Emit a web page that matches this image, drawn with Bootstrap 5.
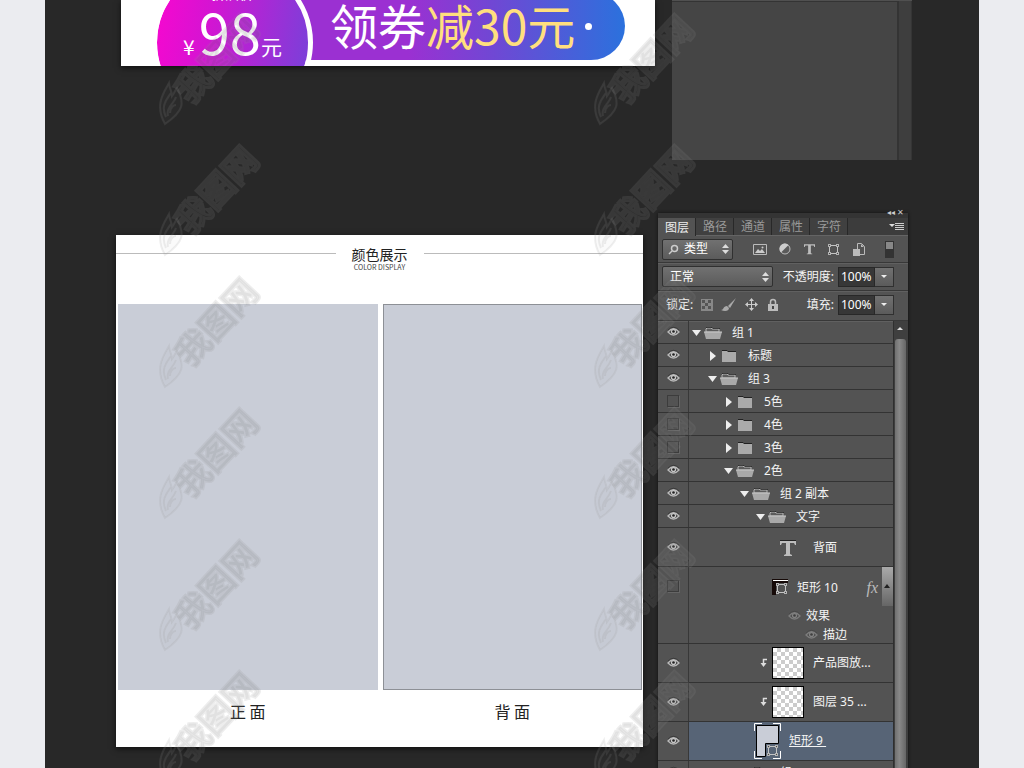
<!DOCTYPE html>
<html lang="zh-CN">
<head>
<meta charset="utf-8">
<meta name="viewport" content="width=device-width, initial-scale=1">
<title>颜色展示</title>
<link href="https://cdn.jsdelivr.net/npm/bootstrap@5.3.0/dist/css/bootstrap.min.css" rel="stylesheet">
<style>
body{background:#ebecf0;font-family:"Noto Sans","Noto Sans CJK SC",sans-serif;font-size:12px;line-height:16px}
.stage{margin:0 45px;height:100vh;background:#282828}
.top-row{padding:0 67px 0 76px;gap:17px;margin-bottom:53px}
.bottom-row{padding:0 71px;gap:15px}
.art{background:#fff;box-shadow:0 2px 6px rgba(0,0,0,.6)}
.cjk{font-family:"Noto Sans CJK SC",sans-serif}
/* coupon banner */
.banner{height:66px;min-width:0}
.pill{margin:-8px 30px 0 110px;height:68px;border-radius:0 34px 34px 0;background:linear-gradient(90deg,#9b30d2 45%,#6f48d4 67%,#2b71dd);color:#fff;font-size:48px;line-height:64px;padding-left:99px;white-space:nowrap}
.pill span{margin-top:-5px}
.pill em{font-style:normal;color:#ffdf7e}
.pill .dot{width:7px;height:7px;background:#fff;margin:0 0 0 10px}
.coin{left:31px;top:-38px;width:161px;height:161px;border:5px solid #fff;background:linear-gradient(100deg,#fa06cf,#d414d2 35%,#7a40d9 95%);background-clip:padding-box;color:#fff}
.coin-note{font-size:14px;line-height:16px;margin-top:18px}
.coin-price{font-size:56px;line-height:60px}
.coin-price small{font-size:21px}
.side-top{width:240px;height:160px;background:#454545;border-top:1px solid #505050;box-shadow:inset 0 1px #343434}
.side-top i{width:15px;background:#3e3e3e;border-left:2px solid #343434;border-right:1px solid #353535}
/* colour board */
.board{margin-top:22px;height:512px;color:#222;min-width:0}
.board-head{height:69px;padding-top:18px}
.board-head hr{margin:0;opacity:1;border-color:#bbb}
.board-head h1{font-size:14px;line-height:18px;margin:-8px 16px 0;font-weight:400}
.board-head p{font-size:7px;line-height:8px;margin:0;color:#444}
.panes{gap:5px;padding:0 1px 0 2px}
.swatch{height:386px;background:#c9cdd7}
.swatch.edged{border:1px solid #8d9096}
.panes figcaption{font-size:16px;line-height:20px;margin-top:11px;text-align:center}
/* layers panel */
.panel{width:250px;background:#535353;color:#f4f4f4;box-shadow:0 0 3px #111}
.grip{height:5px;background:#343434;position:relative}
.grip span{position:absolute;right:4px;top:-6px;font-size:8px;line-height:10px;color:#ccc}
.tabs{background:#3c3c3c;border-bottom:1px solid #646464;height:18px}
.tabs button{border:0;border-right:1px solid #282828;background:#404040;color:#999;padding:0 7px;width:38px;line-height:17px;white-space:nowrap;height:17px}
.tabs button.active{background:#535353;color:#eee;height:18px}
.tool{height:28px;padding:0 14px 0 4px;border-bottom:1px solid #383838;box-shadow:0 1px #606060}
.tool:nth-of-type(3){height:27px}
.tool.locks{height:30px;padding-bottom:2px}
.tool svg,.tree svg{display:block;flex:none}
.tool select{appearance:none;height:21px;border:1px solid #303030;border-radius:2px;color:#fff;padding:0 0 0 7px;line-height:18px;background:url("data:image/svg+xml,%3Csvg xmlns='http://www.w3.org/2000/svg' width='7' height='10'%3E%3Cpath fill='%23ddd' d='M0 4L3.5 0 7 4zM0 6h7L3.5 10z'/%3E%3C/svg%3E") right 3px center no-repeat,linear-gradient(#717171,#5b5b5b)}
.tool .kind{width:71px;padding-left:21px}
.tool .blend{width:111px}
.search{left:6px;top:5px;pointer-events:none}
.pct{width:37px;height:20px;background:#373737;border:1px solid #282828;color:#fff;padding:0 0 0 2px;font-size:12px}
.drop{width:19px;height:20px;background:linear-gradient(#717171,#5b5b5b);border:1px solid #303030;border-left:0;padding:0 6px}
.tree{margin:0;padding:0;list-style:none;min-width:0}
.tree>li{display:flex;height:23px;border-bottom:1px solid #333}
.tree>li.tall{height:39px}
.tree>li.fxrow{height:77px}
.vis{width:31px;border-right:1px solid #383838;padding:5px 0 0 9px;flex:none}
.tall .vis,.fxrow .vis{padding-top:13px}
.vis input,.eye{appearance:none;display:block;margin:0;width:12px;height:12px;border:1px solid #3c3c3c;box-shadow:1px 1px #656565}
.vis input:checked,.eye{border:0;box-shadow:none;width:13px;background:url("data:image/svg+xml,%3Csvg xmlns='http://www.w3.org/2000/svg' width='13' height='12'%3E%3Cpath d='M1 6Q6.500-.5 12 6 6.500 12 1 6z' fill='%23454545' stroke='%23b9b9b9' stroke-width='1.300'/%3E%3Ccircle cx='6.500' cy='5.500' r='2.600' fill='%23c8c8c8'/%3E%3Ccircle cx='6.500' cy='5.500' r='1.300' fill='%23222'/%3E%3Cpath d='M1 4Q6.500-1.500 12 4' fill='none' stroke='%23333' stroke-width='.8'/%3E%3C/svg%3E") no-repeat}
.eye{opacity:.4;margin-right:5px}
.item{display:flex;align-items:center;flex:1;min-width:0;white-space:nowrap;padding:2px 0 0 3px}
.item .arrow{margin-right:2px}
.item .folder{margin-right:10px}
.lv1{padding-left:19px}.lv2{padding-left:35px}.lv3{padding-left:51px}.lv4{padding-left:67px}
.lt{padding-left:90px}.lr{padding-left:83px}.lc{padding:0 0 0 71px}.ls{padding:0 0 0 65px}
.thumb{width:32px;height:32px;border:1px solid #000;background:repeating-conic-gradient(#ccc 0 25%,#fff 0 50%) 0 0/8px 8px;margin-right:9px}
.picked .item{background:#576476}
.fx-mark{font-size:16px;color:#bbb;font-family:"Liberation Serif",serif}
.sub-fx{height:19px;display:flex;align-items:center;padding-left:99px}
.sub-fx.inner{padding-left:116px}
.fx-btn{width:11px;height:39px;border:0;padding:0;background:linear-gradient(#aaa,#666)}
.bar{width:15px;background:#3f3f3f;border-left:1px solid #2f2f2f;padding:6px 2px 0 1px;flex:none}
.bar svg{display:block}
.bar i{display:block;background:linear-gradient(90deg,#707070,#888 40%,#666);border-radius:3px 3px 0 0;margin-top:8px;height:500px}
.stamp{left:0;top:0;width:100%;height:100%;pointer-events:none;z-index:9}
</style>
</head>
<body class="position-relative overflow-hidden">
<svg class="d-none" aria-hidden="true">
<symbol id="open" viewBox="0 0 18 12"><path d="M2 5V2l1-1h4l1 1h7v3z" fill="#5c5c5c" stroke="#b5b5b5"/><path d="M0 5h18l-2 7H2z" fill="#a9a9a9"/><path d="M0 5h18" stroke="#c9c9c9"/><path d="M2 .5h6l1 1h7" fill="none" stroke="#222" stroke-width=".7"/></symbol>
<symbol id="shut" viewBox="0 0 18 12"><path d="M2 1h5l1 1h8v10H2z" fill="#aaa"/><path d="M2 .5h5l1 1h8" fill="none" stroke="#222"/></symbol>
<symbol id="down" viewBox="0 0 10 12"><path d="M0 3h9L4.500 9z" fill="#eee"/></symbol>
<symbol id="right" viewBox="0 0 10 12"><path d="M2 1l6 5-6 5z" fill="#eee"/></symbol>
<symbol id="frame" viewBox="0 0 13 13"><path d="M3 2.500h7M3 10.500h7M2.500 3v7M10.500 3v7" stroke="#c4c4c4" fill="none"/><path d="M1 1h3v3H1zM9 1h3v3H9zM1 9h3v3H1zM9 9h3v3H9z" fill="#b4b4b4"/><path d="M2 2h1v1H2zM10 2h1v1h-1zM2 10h1v1H2zM10 10h1v1h-1z" fill="#444"/></symbol>
<symbol id="clip" viewBox="0 0 8 10"><path d="M7 1.500H3.500V6" fill="none" stroke="#ddd" stroke-width="1.500"/><path d="M.5 5h6l-3 4z" fill="#ddd"/></symbol>
<symbol id="tee" viewBox="0 0 16 16"><path d="M0 1h16v4h-1l-1-2h-4v11l2 1v1H4v-1l2-1V3H2L1 5H0z" fill="#bdbdbd"/></symbol>
<symbol id="tri" viewBox="0 0 6 4"><path d="M0 0h6L3 3z" fill="#eee"/></symbol>
</svg>
<main class="stage overflow-hidden">
  <div class="top-row d-flex align-items-start">
    <section class="art banner cjk flex-grow-1 position-relative overflow-hidden" aria-label="领券">
      <div class="pill d-flex align-items-center"><span>领券<em>减30元</em></span><span class="dot rounded-circle"></span></div>
      <div class="coin rounded-circle position-absolute text-center text-nowrap"><div class="coin-note">折后价</div><div class="coin-price"><small class="me-1">¥</small>98<small>元</small></div></div>
    </section>
    <aside class="side-top d-flex justify-content-end flex-shrink-0"><i></i></aside>
  </div>
  <div class="bottom-row d-flex align-items-start">
    <section class="art board cjk flex-grow-1">
      <header class="board-head d-flex align-items-start"><hr class="flex-fill"><div class="text-center"><h1>颜色展示</h1><p>COLOR DISPLAY</p></div><hr class="flex-fill"></header>
      <div class="panes d-flex">
        <figure class="flex-fill m-0"><div class="swatch"></div><figcaption>正 面</figcaption></figure>
        <figure class="flex-fill m-0"><div class="swatch edged"></div><figcaption>背 面</figcaption></figure>
      </div>
    </section>
    <aside class="panel flex-shrink-0">
      <div class="grip"><span>◂◂ ✕</span></div>
      <div class="tabs d-flex">
        <button class="active">图层</button><button>路径</button><button>通道</button><button>属性</button><button>字符</button>
        <svg class="ms-auto me-1 mt-1" width="15" height="10"><path d="M0 2h6L3 5z" fill="#ddd"/><path d="M6 1.500h9M6 3.500h9M6 5.500h9M6 7.500h9" stroke="#ccc"/></svg>
      </div>
      <div class="tool d-flex align-items-center">
        <div class="position-relative"><select class="kind" aria-label="类型"><option>类型</option></select><svg class="search position-absolute" width="11" height="11"><circle cx="6.500" cy="4.500" r="3" fill="none" stroke="#ccc" stroke-width="1.500"/><path d="M4 7L1 10" stroke="#ccc" stroke-width="1.500"/></svg></div>
        <div class="d-flex flex-fill justify-content-between align-items-center ps-3 ms-1">
          <svg width="14" height="13"><path d="M.5 1.500h13v10H.5z" fill="#555" stroke="#bbb"/><path d="M2 10l3-4 2 2 2-2 3 4z" fill="#ccc"/><circle cx="9.500" cy="4.500" r="1" fill="#ccc"/></svg>
          <svg width="12" height="12"><circle cx="6" cy="6" r="5" fill="#5a5a5a" stroke="#bbb"/><path d="M2 9.500A5 5 0 0 1 9.500 2z" fill="#ccc"/></svg>
          <svg width="11" height="12" viewBox="0 0 16 16"><use href="#tee" width="16" height="16"/></svg>
          <svg width="13" height="13"><use href="#frame"/></svg>
          <svg width="12" height="13"><path d="M4.500 6V.5h4l3 3v8H7" fill="none" stroke="#bbb"/><path d="M8 1v3h3M0 6h7v7H0z" fill="#bbb"/></svg>
          <svg class="ms-2" width="9" height="17"><path d="M0 0h9v17H0z" fill="#333"/><path d="M1 1h7v7H1z" fill="#888"/></svg>
        </div>
      </div>
      <div class="tool d-flex align-items-center">
        <select class="blend" aria-label="混合模式"><option>正常</option></select>
        <label class="ms-auto me-1" for="op">不透明度:</label><input class="pct" id="op" value="100%"><button class="drop" aria-label="不透明度选项"><svg width="6" height="4"><use href="#tri"/></svg></button>
      </div>
      <div class="tool locks d-flex align-items-center">
        <span class="ms-1 me-2">锁定:</span>
        <svg width="12" height="12"><path d="M0 0h12v12H0z" fill="#888"/><path d="M1 1h3v3H1zM7 1h3v3H7zM4 4h3v3H4zM1 7h3v3H1zM7 7h3v3H7z" fill="#555"/></svg>
        <svg class="ms-2" width="16" height="14"><path d="M15 0L9 10 7 8z" fill="#aaa"/><path d="M0 12c3 0 2-4 6-4l2 2c0 3-4 4-8 2z" fill="#aaa"/></svg>
        <svg class="ms-2" width="13" height="13"><path d="M6.500 1v11M1 6.500h11" stroke="#ccc"/><path d="M4 3l2.500-3L9 3zM4 10l2.500 3L9 10zM3 4L0 6.500 3 9zM10 4l3 2.500L10 9z" fill="#ccc"/></svg>
        <svg class="ms-2 me-auto" width="14" height="13"><path d="M4.500 6V4a2.500 2.500 0 0 1 5 0v2" fill="none" stroke="#bbb" stroke-width="1.500"/><path d="M2 6h10v7H2z" fill="#bbb"/><path d="M6 8h2v3H6z" fill="#444"/></svg>
        <label class="me-1" for="fi">填充:</label><input class="pct" id="fi" value="100%"><button class="drop" aria-label="填充选项"><svg width="6" height="4"><use href="#tri"/></svg></button>
      </div>
      <div class="d-flex">
        <ul class="tree flex-grow-1">
          <li><span class="vis"><input type="checkbox" checked aria-label="显示组 1"></span><div class="item"><svg class="arrow" width="10" height="12"><use href="#down"/></svg><svg class="folder" width="18" height="12"><use href="#open"/></svg>组 1</div></li>
          <li><span class="vis"><input type="checkbox" checked aria-label="显示标题"></span><div class="item lv1"><svg class="arrow" width="10" height="12"><use href="#right"/></svg><svg class="folder" width="18" height="12"><use href="#shut"/></svg>标题</div></li>
          <li><span class="vis"><input type="checkbox" checked aria-label="显示组 3"></span><div class="item lv1"><svg class="arrow" width="10" height="12"><use href="#down"/></svg><svg class="folder" width="18" height="12"><use href="#open"/></svg>组 3</div></li>
          <li><span class="vis"><input type="checkbox" aria-label="显示5色"></span><div class="item lv2"><svg class="arrow" width="10" height="12"><use href="#right"/></svg><svg class="folder" width="18" height="12"><use href="#shut"/></svg>5色</div></li>
          <li><span class="vis"><input type="checkbox" aria-label="显示4色"></span><div class="item lv2"><svg class="arrow" width="10" height="12"><use href="#right"/></svg><svg class="folder" width="18" height="12"><use href="#shut"/></svg>4色</div></li>
          <li><span class="vis"><input type="checkbox" aria-label="显示3色"></span><div class="item lv2"><svg class="arrow" width="10" height="12"><use href="#right"/></svg><svg class="folder" width="18" height="12"><use href="#shut"/></svg>3色</div></li>
          <li><span class="vis"><input type="checkbox" checked aria-label="显示2色"></span><div class="item lv2"><svg class="arrow" width="10" height="12"><use href="#down"/></svg><svg class="folder" width="18" height="12"><use href="#open"/></svg>2色</div></li>
          <li><span class="vis"><input type="checkbox" checked aria-label="显示组 2 副本"></span><div class="item lv3"><svg class="arrow" width="10" height="12"><use href="#down"/></svg><svg class="folder" width="18" height="12"><use href="#open"/></svg>组 2 副本</div></li>
          <li><span class="vis"><input type="checkbox" checked aria-label="显示文字"></span><div class="item lv4"><svg class="arrow" width="10" height="12"><use href="#down"/></svg><svg class="folder" width="18" height="12"><use href="#open"/></svg>文字</div></li>
          <li class="tall"><span class="vis"><input type="checkbox" checked aria-label="显示背面"></span><div class="item lt"><svg class="me-3" width="18" height="16"><path d="M1 .5h16" stroke="#222"/><use href="#tee"/></svg>背面</div></li>
          <li class="fxrow"><span class="vis"><input type="checkbox" aria-label="显示矩形 10"></span>
            <div class="flex-fill">
              <div class="d-flex"><div class="item lr"><svg class="me-2" width="17" height="17"><path d="M0 0h16v4H4v12H0z" fill="#160a08"/><path d="M1 1.500h15" stroke="#fff"/><use href="#frame" x="3" y="3" width="13" height="13"/></svg>矩形 10<i class="fx-mark ms-auto me-1">fx</i></div><button class="fx-btn" aria-label="折叠效果"><svg class="mx-auto" width="7" height="5"><path d="M0 4h6L3 0z" fill="#222"/></svg></button></div>
              <div class="sub-fx"><span class="eye"></span>效果</div>
              <div class="sub-fx inner"><span class="eye"></span>描边</div>
            </div></li>
          <li class="tall"><span class="vis"><input type="checkbox" checked aria-label="显示产品图放"></span><div class="item lc"><svg class="me-1" width="8" height="10"><use href="#clip"/></svg><span class="thumb"></span>产品图放...</div></li>
          <li class="tall"><span class="vis"><input type="checkbox" checked aria-label="显示图层 35"></span><div class="item lc"><svg class="me-1" width="8" height="10"><use href="#clip"/></svg><span class="thumb"></span>图层 35 ...</div></li>
          <li class="tall picked"><span class="vis"><input type="checkbox" checked aria-label="显示矩形 9"></span><div class="item ls"><svg class="me-2" width="27" height="36"><path d="M.5 8V.5H8M19 .5h7.500V8M.5 28v7.500H8M19 35.500h7.500V28" fill="none" stroke="#fff"/><path d="M2.500 2.500h22v18h-13v13h-9z" fill="#c9cdd7" stroke="#000"/><use href="#frame" x="12" y="21" width="13" height="13"/></svg><u>矩形 9&nbsp;</u></div></li>
          <li><span class="vis"><input type="checkbox" checked aria-label="显示组 2"></span><div class="item lv3"><svg class="arrow" width="10" height="12"><use href="#down"/></svg><svg class="folder" width="18" height="12"><use href="#open"/></svg>组 2</div></li>
        </ul>
        <div class="bar"><svg class="mx-auto" width="7" height="4"><path d="M0 3h6L3 0z" fill="#ddd"/></svg><i></i></div>
      </div>
    </aside>
  </div>
</main>
<svg class="stamp position-absolute" aria-hidden="true">
  <defs>
    <g id="mark">
      <g transform="translate(33 97) rotate(-47)" font-family="Noto Sans CJK SC, sans-serif" font-size="34" font-weight="500"><text stroke="#909090" stroke-opacity=".16" stroke-width="3" fill="#202020" fill-opacity=".06" paint-order="stroke">我图网</text></g>
      <path d="M7 116C-4 97 6 84 11 75c1 8 3 8 3 13 3-4 3-6 5-8 8 15 7 23-12 36zM8 109C2 97 10 90 13 85M10 108c-2-9 6-12 8-19M12 105c0-6 4-8 6-8" fill="#808080" fill-opacity=".04" stroke="#909090" stroke-opacity=".15" stroke-width="2"/>
    </g>
    <pattern id="marks" x="158" y="8" width="435" height="263" patternUnits="userSpaceOnUse"><use href="#mark" y="0"/><use href="#mark" y="131"/></pattern>
  </defs>
  <rect width="100%" height="100%" fill="url(#marks)"/>
</svg>
<script src="https://cdn.jsdelivr.net/npm/bootstrap@5.3.0/dist/js/bootstrap.bundle.min.js"></script>
</body>
</html>
